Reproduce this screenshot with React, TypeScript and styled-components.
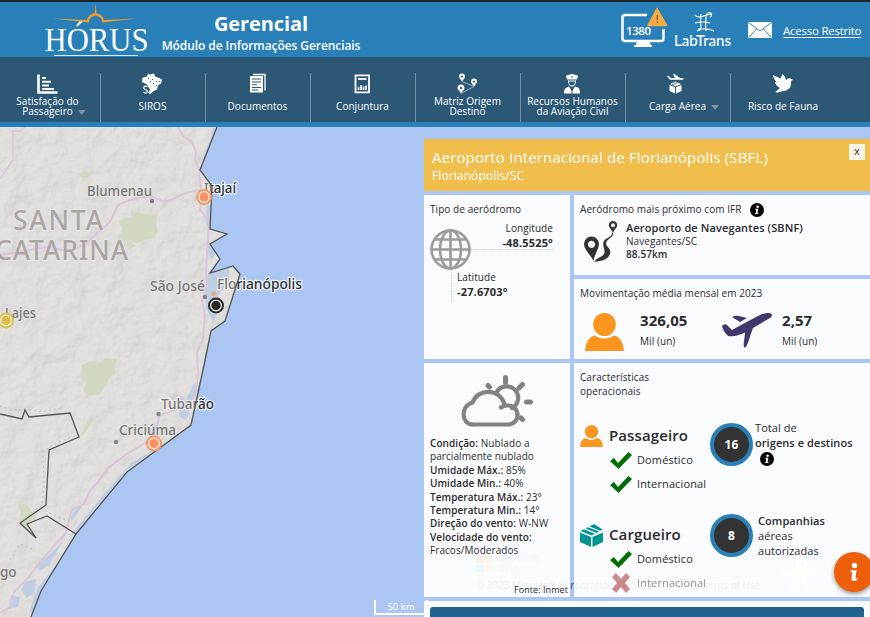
import React from "react";
import styled, { createGlobalStyle } from "styled-components";

const Global = createGlobalStyle`
  * { box-sizing: border-box; }
  html, body { margin: 0; padding: 0; overflow: hidden; }
  body { font-family: "Open Sans", "Noto Sans", sans-serif; color: #2b2b2b; }
  svg { display: block; flex: none; }
`;

const Page = styled.div`
  display: flex;
  flex-direction: column;
  width: 870px;
  height: 617px;
  overflow: hidden;
  border-top: 2px solid #1c232b;
`;

/* ---------- header ---------- */

const Header = styled.header`
  display: flex;
  flex: none;
  height: 55px;
  background: #2980b9;
  color: #fff;
`;

const Logo = styled.svg`
  margin-left: 44px;
  overflow: visible;
`;

const Titles = styled.div`
  width: 200px;
  margin-left: 9px;
  padding-top: 9px;
  text-align: center;
  white-space: nowrap;
`;

const Title = styled.h1`
  margin: 0;
  font-size: 20px;
  line-height: 26px;
  font-weight: 700;
  letter-spacing: -0.1px;
`;

const Subtitle = styled.div`
  font-size: 12px;
  line-height: 17px;
  font-weight: 600;
  letter-spacing: -0.08px;
`;

const HeaderTools = styled.div`
  display: flex;
  flex: 1;
  justify-content: flex-end;
  padding-right: 10px;
`;

const MailIcon = styled.svg`
  margin: 20px 11px 0 17px;
`;

const Access = styled.a`
  width: 77px;
  margin-top: 20px;
  font-size: 11.5px;
  line-height: 17px;
  color: #fff;
  text-decoration: underline;
  text-underline-offset: 2px;
  letter-spacing: -0.24px;
  white-space: nowrap;
`;

/* ---------- navigation ---------- */

const Nav = styled.nav`
  display: flex;
  flex: none;
  height: 70px;
  padding-top: 16px;
  background: #2c5775;
  border-bottom: 5px solid #2980b9;
`;

const NavItem = styled.div<{ $first?: boolean; $last?: boolean }>`
  display: flex;
  flex: none;
  flex-direction: column;
  align-items: center;
  width: 105px;
  margin-left: ${(p) => (p.$first ? "-4px" : "0")};
  padding-right: 1px;
  border-right: ${(p) => (p.$last ? "0" : "1px solid #7292a8")};
  color: #fff;
`;

const NavLabel = styled.div`
  display: flex;
  flex-direction: column;
  align-items: center;
  justify-content: center;
  height: 22px;
  margin-top: 1px;
  font-size: 10px;
  line-height: 10px;
  letter-spacing: 0.03px;
  white-space: nowrap;
`;

const Caret = styled.i`
  display: inline-block;
  width: 8px;
  height: 5px;
  margin: 0 -13px 0 5px;
  background: #7d93a3;
  clip-path: polygon(0 0, 100% 0, 50% 100%);
`;

/* ---------- map ---------- */

const MapArea = styled.main`
  position: relative;
  flex: 1;
  overflow: hidden;
  background: #abc6f2;
`;

const Scale = styled.div`
  position: absolute;
  left: 374px;
  top: 473px;
  width: 54px;
  height: 15px;
  border: solid #fff;
  border-width: 0 2px 2px 2px;
  color: #fff;
  font-size: 9.5px;
  line-height: 14px;
  text-align: center;
`;

const Compass = styled.svg`
  position: absolute;
  left: 780px;
  top: 429px;
`;

const Fab = styled.button`
  position: absolute;
  left: 834px;
  top: 425px;
  width: 40px;
  height: 40px;
  padding: 0;
  border: 0;
  border-radius: 50%;
  background: #ee5f0c;
  box-shadow: 0 2px 4px rgba(0, 0, 0, 0.4);
  display: flex;
  align-items: center;
  justify-content: center;
`;

/* ---------- airport panel ---------- */

const Panel = styled.section`
  position: absolute;
  left: 424px;
  top: 12px;
  width: 446px;
  height: 478px;
  display: flex;
  flex-direction: column;
  gap: 4px;
`;

const PanelHead = styled.div`
  display: flex;
  flex: none;
  justify-content: space-between;
  height: 52px;
  padding: 5px 5px 0 8px;
  background: #f1be4b;
  color: #fff;
`;

const PanelTitle = styled.h2`
  margin: 0;
  padding-top: 3px;
  font-size: 15px;
  line-height: 20px;
  font-weight: 400;
  letter-spacing: 0.14px;
  white-space: nowrap;
`;

const PanelPlace = styled.div`
  font-size: 12px;
  line-height: 17px;
  letter-spacing: 0.1px;
`;

const Close = styled.button`
  width: 16px;
  height: 16px;
  padding: 0 0 2px;
  border: 0;
  background: #fdf7e8;
  color: #333;
  font: 11px/14px "Open Sans", sans-serif;
`;

const Columns = styled.div`
  display: grid;
  flex: none;
  grid-template-columns: 146px 296px;
  gap: 4px;
`;

const Column = styled.div`
  display: flex;
  flex-direction: column;
  gap: 4px;
`;

const Card = styled.div<{ $h: number }>`
  height: ${(p) => p.$h}px;
  padding: 7px 6px 0;
  background: rgba(255, 255, 255, 0.92);
  font-size: 10px;
  line-height: 14px;
  letter-spacing: 0.07px;
  white-space: nowrap;
`;

const Footer = styled.div`
  flex: 1;
  padding: 6px 6px 0;
  background: rgba(255, 255, 255, 0.92);
`;

const FooterBar = styled.div`
  height: 20px;
  border-radius: 3px;
  background: #20638f;
`;

const Row = styled.div<{ $gap?: number; $top?: number }>`
  display: flex;
  gap: ${(p) => p.$gap ?? 0}px;
  margin-top: ${(p) => p.$top ?? 0}px;
`;

const CoordTop = styled.div`
  width: 82px;
  height: 28px;
  margin-top: -7px;
  border-bottom: 1px dotted #ccc;
  text-align: right;
  line-height: 13.5px;
`;

const CoordBottom = styled.div`
  height: 31px;
  margin: 0 0 0 21px;
  padding: 1px 0 0 5px;
  border-left: 1px dotted #ccc;
  line-height: 13.5px;
`;

const Strong = styled.b`
  display: block;
  font-size: 11px;
  font-weight: 700;
  letter-spacing: 0.16px;
`;

const Semi = styled.b`
  font-weight: 600;
`;

const Nearest = styled.div`
  padding-top: 1px;
  line-height: 13.5px;
`;

const NearestName = styled.div`
  font-size: 11px;
  font-weight: 600;
  letter-spacing: 0.11px;
`;

const Figure = styled.div<{ $w: number }>`
  width: ${(p) => p.$w}px;
`;

const FigureValue = styled.div`
  margin: -1px 0 4px;
  font-size: 15px;
  line-height: 20px;
  font-weight: 700;
  letter-spacing: 0.05px;
`;

const Weather = styled.div`
  margin-top: 9px;
  line-height: 13.4px;
`;

const Source = styled.div`
  margin-top: 25px;
  margin-right: -4px;
  font-size: 9px;
  text-align: right;
`;

const Operations = styled.div`
  display: grid;
  grid-template-columns: 130px 160px;
  grid-auto-rows: 99px;
  margin-top: 26px;
`;

const OpTitle = styled.div`
  display: flex;
  align-items: center;
  gap: 6px;
  height: 24px;
  font-size: 15px;
  line-height: 22px;
  font-weight: 600;
`;

const OpName = styled.span`
  margin-top: -2px;
  letter-spacing: 0.1px;
`;

const OpLine = styled.div<{ $off?: boolean }>`
  display: flex;
  align-items: center;
  gap: 5px;
  height: 24px;
  padding-left: 30px;
  font-size: 11px;
  letter-spacing: 0.12px;
  opacity: ${(p) => (p.$off ? 0.5 : 1)};
`;

const Counter = styled.div<{ $raise: number; $gap: number }>`
  display: flex;
  align-items: flex-start;
  gap: ${(p) => p.$gap}px;
  margin-top: -${(p) => p.$raise}px;
  font-size: 11px;
  line-height: 15px;
`;

const Ring = styled.div`
  display: flex;
  flex: none;
  align-items: center;
  justify-content: center;
  width: 43px;
  height: 43px;
  border: 4px solid #2980b9;
  border-radius: 50%;
  background: #333;
  color: #fff;
  font-size: 12px;
  font-weight: 700;
`;

const CounterText = styled.div<{ $up?: number }>`
  margin-top: -${(p) => p.$up ?? 0}px;
`;

const InfoSlot = styled.div`
  padding: 2px 0 0 5px;
`;

/* ---------- drawings ---------- */

const Info = () => (
  <svg width="14" height="14" viewBox="0 0 14 14">
    <circle cx="7" cy="7" r="7" fill="#000" />
    <circle cx="7.6" cy="3.7" r="1.25" fill="#fff" />
    <path d="M5.3 5.8h3L7.5 10h.9v1H5.1v-1h.7l.5-3.2h-1z" fill="#fff" />
  </svg>
);

const Person = ({ w, h }: { w: number; h: number }) => (
  <svg width={w} height={h} viewBox="0 0 39 38" preserveAspectRatio="none">
    <ellipse cx="19.5" cy="11.5" rx="11.3" ry="11.5" fill="#fa961e" />
    <path d="M0 38C1 29 4 24 9.5 22.500Q19.500 29 29.500 22.500C35 24 38 29 39 38z" fill="#fa961e" />
  </svg>
);

const Globe = () => (
  <svg width="41" height="41" viewBox="0 0 41 41" fill="none" stroke="#9b9b9b" strokeWidth="2.6">
    <circle cx="20.5" cy="20.5" r="19" />
    <ellipse cx="20.500" cy="20.5" rx="10.500" ry="19" />
    <path d="M20.500 1v39M1 20.500h39M4.500 10.500h32M4.500 30.500h32" />
  </svg>
);

const Route = () => (
  <svg width="34" height="41" viewBox="0 0 34 41">
    <path d="M29 12C29.500 17 22 18 22 22.500C22 26 27.500 27 26 33C24.500 38 18 40.500 10.500 40.700C13 36 20.500 36 20.500 31C20.500 27 18.500 25 19.500 21C21 16.500 27.500 17 28 12z" fill="#333" />
    <path fillRule="evenodd" d="M7.500 15.500a7.500 7.500 0 0 1 7.500 7.500c0 5-4 9-5.500 17C7 34 0 29 0 23a7.500 7.500 0 0 1 7.500-7.500zm0 4.300a3.600 3.600 0 1 0 .01 0z" fill="#333" />
    <path fillRule="evenodd" d="M29 0a4.200 4.200 0 0 1 4.200 4.200C33.200 7 30 8 29 12.500C28 8 24.800 7 24.800 4.200A4.200 4.200 0 0 1 29 0zm0 2.300a2 2 0 1 0 .01 0z" fill="#333" />
  </svg>
);

const Plane = () => (
  <svg width="50" height="35" viewBox="0 0 50 35" fill="#43366b">
    <path d="M0 13c2-2 4-2 5-1l5 5 9-5L36 3c6-3 11-4 13.500-2 1.500 2-1 4-5 6L31 15c-3 7-4 14-7 19l-2 .5c-1-5 1-10 1-15-6 3-12 4.500-17 3.500C3 20 1 17 0 13z" />
    <path d="M10 4c3-1.500 5-1.500 7-1l8 2-7 4c-2-2-6-3-8-5z" />
  </svg>
);

const Cloud = () => (
  <svg width="72" height="53" viewBox="0 0 72 53" fill="none" stroke="#828286" strokeWidth="4.200" strokeLinecap="round">
    <path d="M12 49.500h35a9.500 9.500 0 0 0 0-19c-3-.3-5 .5-7 2" />
    <path d="M12 49.500C0 49.500-1 31 11.500 27.500C17 13 38 13 43.500 29" />
    <path d="M35 18.500a11.500 11.500 0 1 1 16 14.500" />
    <path d="M44.500 2.500v5M61.500 9.500l-3.500 3.500M65.500 27h4M60 43l1.500 1.500M27 10.500l1.500 1.500" strokeWidth="5" />
  </svg>
);

const Check = () => (
  <svg width="22" height="17" viewBox="0 0 22 17">
    <path d="M0 9l4-3 4 5L18.500 0 22 3 8.500 17z" fill="#006f00" />
  </svg>
);

const Cross = () => (
  <svg width="22" height="20" viewBox="0 0 22 20">
    <path d="M2 4l4-4 5 6 5-6 4 4-5 6 5 6-4 4-5-6-5 6-4-4 5-6z" fill="#a31a1a" />
  </svg>
);

const Box = () => (
  <svg width="23" height="23" viewBox="0 0 23 23" fill="#009594">
    <path d="M0 8.500l11 4.500v10L0 18zM12.500 13L23 8.500V18l-10.500 5zM.5 7L4 5.200l11 4.500-3.300 1.800zM5.500 4.500L8 3.300l11 4.300-2.500 1.300zM9.500 2.500L14 0l8.500 5.500L20 6.800z" />
  </svg>
);

const Horus = () => (
  <Logo width="108" height="55" viewBox="44 2 108 55">
    <path d="M53 18.500l34 1.500c2-9 15-9 17 0l33-1.500-35 4c0-9-13-9-13 0z" fill="#f39a2c" />
    <path d="M94.700 14l.9-11 .9 11z" fill="#f39a2c" />
    <text x="44.500" y="51" fill="#fff" fontFamily="'Liberation Serif', serif" fontSize="33.500" textLength="104" lengthAdjust="spacingAndGlyphs">HÓRUS</text>
    <path d="M54 55.500h84" stroke="#d9e9f4" />
  </Logo>
);

const Monitor = () => (
  <svg width="47" height="55" viewBox="620 2 47 55">
    <path d="M647 15h-22q-2.500 0-2.500 2.500v21q0 2.500 2.500 2.500h36q2.500 0 2.500-2.500V29" fill="none" stroke="#fff" strokeWidth="2.500" />
    <path d="M637 41h12l2 4h1v2h-18v-2h2z" fill="#fff" />
    <path d="M657 9l9.500 17H648z" fill="#f6ab42" stroke="#f6ab42" strokeWidth="1.500" strokeLinejoin="round" transform="translate(0 -.500)" />
    <path d="M657.300 15v5M657.300 21.500v1.500" stroke="#94632d" strokeWidth="1.500" />
    <text x="626" y="35" fill="#fff" fontSize="11.500" fontWeight="600" textLength="25">1380</text>
  </svg>
);

const LabTrans = () => (
  <svg width="64" height="55" viewBox="667 2 64 55">
    <path d="M695 15q2 3 7 1.500t8-2.500q3 0 0 3.500M698 29h8q5 0 8 2M701 14q-1 8 0 14-1 3-4 2.500M706 31q-1-12 1-17 2-3 5 0M695 23q8-2 15 0" fill="none" stroke="#fff" strokeWidth="1.100" />
    <text x="674" y="46" fill="#fff" fontFamily="Lato, sans-serif" fontSize="15" fontWeight="500" textLength="57">LabTrans</text>
  </svg>
);

const Mail = () => (
  <MailIcon width="24" height="16" viewBox="0 0 24 16">
    <path d="M0 0h24v16H0z" fill="#fff" />
    <path d="M.5.5l10 7.500q1.500 1 3 0l10-7.500M.5 15.500l8-8.500M23.500 15.500l-8-8.500" fill="none" stroke="#2980b9" />
  </MailIcon>
);

const navIcons: Record<string, React.ReactNode> = {
  bars: (
    <>
      <path d="M1.500 1v18h19" fill="none" stroke="#fff" strokeWidth="2.600" />
      <path d="M5 4.500h4M5 8.300h9M5 12h7M5 15.500h12" stroke="#fff" strokeWidth="1.900" />
    </>
  ),
  brazil: (
    <>
      <path d="M1 4l4-1 1-3 2 1 4-1 1 3 3 1 4 2-1 4-3 2-1 4-4 2-3 3-2-2 2-3-3-5-4-2-3-1z" fill="#fff" />
      <path d="M6 5h1M10 6h1M14 8h1M11 10h1M14 12h1M17 8h1M8 8h1" stroke="#2c5775" />
      <path d="M5.500 13.200Q3 11.800 2 13.500T3.600 16Q6 17 5 18.800T1.400 18.600" fill="none" stroke="#fff" strokeWidth="1.200" />
    </>
  ),
  docs: (
    <>
      <path d="M6 1h12v16" fill="none" stroke="#fff" strokeWidth="1.300" />
      <path d="M3 2.500h13V19H3z" fill="#fff" />
      <path d="M5 5.500h9M5 8.500h9M5 11.300h5M5 14h9M5 16.500h6" stroke="#2c5775" strokeWidth="1.100" />
    </>
  ),
  chart: (
    <>
      <path d="M3.500 1.800h13.500v17H3.500z" fill="none" stroke="#fff" strokeWidth="1.800" />
      <path d="M6 5.500h8.500" stroke="#fff" strokeWidth="1.800" />
      <path d="M6.500 16.500v-3M9 16.500v-5M11.500 16.500v-3.500M14 16.500v-4.500" stroke="#fff" strokeWidth="1.700" />
    </>
  ),
  pins: (
    <>
      <path fillRule="evenodd" d="M5 0a3 3 0 0 1 3 3c0 2-2 3-3 5C4 6 2 5 2 3a3 3 0 0 1 3-3zm0 2a1 1 0 1 0 .01 0zM17 5a3 3 0 0 1 3 3c0 2-2 3-3 5-1-2-3-3-3-5a3 3 0 0 1 3-3zm0 2a1 1 0 1 0 .01 0zM4 11a3.500 3.500 0 0 1 3.500 3.500c0 2-2.500 3.500-3.500 5.500-1-2-3.500-3.500-3.500-5.500A3.500 3.500 0 0 1 4 11zm0 2.300a1.200 1.200 0 1 0 .01 0z" fill="#fff" />
      <path d="M5 8l12 5-13 7" fill="none" stroke="#b7c7d2" strokeWidth=".8" />
    </>
  ),
  officer: (
    <>
      <path d="M4 2l6-1.500L16 2l-1 4H5zM6 7h8c0 8-8 8-8 0zM2 20c0-5 2-6 5-7l3 5 3-5c4 1 5 2 5 7z" fill="#fff" />
      <path d="M7 8h6q0 3.500-3 4T7 8z" fill="#2c5775" />
      <path d="M10 14v6" stroke="#2c5775" />
      <path d="M9 3.500h2" stroke="#2c5775" strokeWidth=".8" />
    </>
  ),
  cargo: (
    <>
      <path d="M0 2.500l1.500-.3L4 4.500h4L6 .5h1.500L13 4.500h3q1.500.7 0 1.800H3z" fill="#fff" />
      <path d="M2.500 11.500l5.500 2.300V20l-5.500-2.500zM9 13.800l5.500-2.300v6L9 20zM3 10.500L8.500 8l5.500 2.500L8.500 13z" fill="#fff" />
      <path d="M5 11.500l5.500-2.700" stroke="#2c5775" strokeWidth=".9" />
    </>
  ),
  bird: (
    <path d="M0 1.500l7.500 3.500 2-4.500q2.500 2 3.500 6 2-2.500 4.500-1.500l2.500 1.200-2 1.500c1 7-4 9.800-8 9.800l-6 1.800-1.500-1L7 14.500Q2.500 12 2 8.500l2 .5Q.5 6 0 1.500z" fill="#fff" />
  ),
};

const NavIcon = ({ kind }: { kind: string }) => (
  <svg width="21" height="21" viewBox="0 -.5 21 21">
    {navIcons[kind]}
  </svg>
);

const COAST =
  "217,127 200,170 212,186 210,229 227,234 210,244 220,259 210,273 233,266 240,274 225,321 211,331 203,370 191,425 127,472 76,534 41,591 31,617";

const Marker = ({ x, y, c }: { x: number; y: number; c: string }) => (
  <g>
    <circle cx={x} cy={y} r="7" fill="#f4eeea" stroke={c} strokeWidth="1.900" />
    <circle cx={x} cy={y} r="4.700" fill={c} />
  </g>
);

const MapDrawing = () => (
  <svg width="870" height="490" viewBox="0 127 870 490">
    <defs>
      <clipPath id="land"><polygon points={`0,127 ${COAST} 0,617`} /></clipPath>
      <filter id="relief" x="0" y="0" width="1" height="1" colorInterpolationFilters="sRGB">
        <feTurbulence type="fractalNoise" baseFrequency="0.05" numOctaves="4" seed="8" result="n" />
        <feDiffuseLighting in="n" surfaceScale="5" lightingColor="#fff">
          <feDistantLight azimuth="225" elevation="62" />
        </feDiffuseLighting>
      </filter>
    </defs>
    <g clipPath="url(#land)">
      <rect y="127" width="260" height="490" fill="#e3e2e0" />
      <rect y="127" width="260" height="490" filter="url(#relief)" opacity=".16" />
      <g fill="#c9d8b2">
        <path d="M118 221l14-5 3-4 9 2 13 0-1 9 2 9-5 6-9 2-7 3-7-3-7 2-4-6 4-6zM124 241l12 4-7 6-1-5zM79 174l8-2 5 1-2 4-8 1zM82 365l10-4 8 2 5-5 13 1-4 8 2 6-6 4-3 6-7 11-9 2-8-5 3-8-4-6z" />
        <path d="M81 434l7-13 8-4-9 13-5 7zM18 503l8 1 4 5 6 8-4 6-9 6-3-8 1-8z" />
      </g>
      <g fill="#aac4e9">
        <path d="M213 127l-3 12-5 14-2 12-3 5 17-40zM207 205l5 0-1 24-5-4zM208 240l8 13-4 6-6-8zM208 273l21-6 0 14-11 15 3 12-8 14-7-14-1-18zM196 381l-5 8-5 12-5-6-3 6 2 4-1 11 6 4 5-6-2-7 7-10zM211 331l-8 37-6 23-1 8 6-28zM170 440l-42 29-50 62-9 6 36-44 26-30zM83 505l-8 12-4 5v-6l6-8zM63 541l-14 24-9 6-4-6 12-9zM36 579l-2 14-7 5-6-8 4-8zM20 597l-2 10-9 2 2-14zM76 540l-35 51-7 20-5 1 9-25z" />
      </g>
      <path d="M231 268l7 6-8 26-12 15-3-6 10-12z" fill="#e4e4e0" />
      <g fill="none" stroke="#d9b7d9" strokeWidth="2">
        <path d="M25 127l-5 4-7 0v29l-13 19" strokeWidth="1.400" />
        <path d="M178 127l5 9 9 6 4 10-1 8 4 10 2 20-1 20 9 10-1 20-2 30 1 15-5 15 3 15-2 25-6 12 1 18-1 15-3 15-14 8-20 7-4 13-11 15-20 12-17 13-11 15-7 7-6 14-12 6-3 10-3 13-11 12-15 17-12 16-14 14-4 15-10 6" />
        <path d="M0 255l20-3 25-5 25 4 15-6 12-12 13-11 8-17 12-5 20-4 12 5h8l15-8 15-3" />
      </g>
      <path d="M0 406l12 4 15-1 15 3 18-4M75 436l-20 7-12 9 1 34-2 20-15 10M45 511l20 9M10 560l10-16 14 6" fill="none" stroke="#aaa" strokeDasharray="2 3" />
    </g>
    <g fontSize="13.500" fontWeight="500" fontFamily="'Noto Sans', 'Open Sans', sans-serif" fill="#2f2f2f" stroke="#fff" strokeWidth="2.500" paintOrder="stroke" strokeLinejoin="round" strokeOpacity=".8">
      <text x="204" y="193" textLength="32" lengthAdjust="spacingAndGlyphs">Itajaí</text>
      <text x="217" y="289" textLength="85" lengthAdjust="spacingAndGlyphs">Florianópolis</text>
      <text x="161" y="409" textLength="53" lengthAdjust="spacingAndGlyphs">Tubarão</text>
      <g strokeOpacity=".25">
        <text x="87" y="196" textLength="65" lengthAdjust="spacingAndGlyphs">Blumenau</text>
        <text x="150" y="291" textLength="55" lengthAdjust="spacingAndGlyphs">São José</text>
        <text x="5" y="318" textLength="31" lengthAdjust="spacingAndGlyphs">Lajes</text>
        <text x="119" y="435" textLength="57" lengthAdjust="spacingAndGlyphs">Criciúma</text>
        <text x="0" y="577">go</text>
        <g fontSize="26.500" fill="#8c7f80">
          <text x="13" y="230" textLength="90">SANTA</text>
          <text x="-5" y="260" textLength="133">CATARINA</text>
        </g>
      </g>
    </g>
    <g fill="#444">
      <circle cx="152" cy="201" r="2.200" />
      <circle cx="205" cy="297" r="2.200" />
      <circle cx="158.500" cy="414" r="2.200" />
      <circle cx="116" cy="442" r="2.200" />
    </g>
    <polygon points={`0,127 ${COAST} 0,617`} fill="#dddcd8" opacity=".42" />
    <polyline points={COAST} fill="none" stroke="#555" strokeWidth="1.300" />
    <polyline points="0,414 22,419 25,410 29,417 70,413 79,437 49,450 46,505 20,523 36,538 27,524 47,516 76,534" fill="none" stroke="#555" strokeWidth="1.300" />
    <circle cx="214" cy="294" r="2.500" fill="#e9a88c" />
    <Marker x={204} y={197} c="#fa9362" />
    <Marker x={154} y={443.500} c="#fa9362" />
    <Marker x={6} y={320.500} c="#dcbd4a" />
    <Marker x={216} y={305.500} c="#262826" />
    <path d="M476 555h8v8h-8z" fill="#f25022" />
    <path d="M485 555h9v8h-9z" fill="#7fba00" />
    <path d="M476 564h8v8h-8z" fill="#00a4ef" />
    <path d="M485 564h9v8h-9z" fill="#ffb900" />
    <g fontSize="10" fill="#8b837c">
      <text x="498" y="562" textLength="41">Microsoft</text>
      <text x="498" y="572" textLength="20">Bing</text>
      <text x="476" y="589" fill="#444" textLength="284">© 2023 Microsoft Corporation, © 2023 TomTom Terms of Use</text>
    </g>
  </svg>
);

const nav = [
  { icon: "bars", lines: ["Satisfação do", "Passageiro"], caret: true },
  { icon: "brazil", lines: ["SIROS"] },
  { icon: "docs", lines: ["Documentos"] },
  { icon: "chart", lines: ["Conjuntura"] },
  { icon: "pins", lines: ["Matriz Origem", "Destino"] },
  { icon: "officer", lines: ["Recursos Humanos", "da Aviação Civil"] },
  { icon: "cargo", lines: ["Carga Aérea"], caret: true },
  { icon: "bird", lines: ["Risco de Fauna"] },
];

const weather = [
  ["Umidade Máx.:", "85%"],
  ["Umidade Min.:", "40%"],
  ["Temperatura Máx.:", "23°"],
  ["Temperatura Min.:", "14°"],
  ["Direção do vento:", "W-NW"],
];

export default function App() {
  return (
    <Page>
      <Global />
      <Header>
        <Horus />
        <Titles>
          <Title>Gerencial</Title>
          <Subtitle>Módulo de Informações Gerenciais</Subtitle>
        </Titles>
        <HeaderTools>
          <Monitor />
          <LabTrans />
          <Mail />
          <Access>Acesso Restrito</Access>
        </HeaderTools>
      </Header>
      <Nav>
        {nav.map((item, i) => (
          <NavItem key={item.icon} $first={i === 0} $last={i === nav.length - 1}>
            <NavIcon kind={item.icon} />
            <NavLabel>
              {item.lines.map((line, n) => (
                <span key={line}>
                  {line}
                  {item.caret && n === item.lines.length - 1 && <Caret />}
                </span>
              ))}
            </NavLabel>
          </NavItem>
        ))}
      </Nav>
      <MapArea>
        <MapDrawing />
        <Scale>50 km</Scale>
        <Compass width="37" height="37" viewBox="0 0 37 37">
          <path d="M18.500 0l2.500 11 8-5-4.500 8.500L36 18.500l-11.500 3L29 31l-8-5-2.500 11L16 26l-8 5 4.500-9.500L0 18.500l12.500-4L8 6l8 5z" fill="#fff" />
        </Compass>
        <Panel>
          <PanelHead>
            <div>
              <PanelTitle>Aeroporto Internacional de Florianópolis (SBFL)</PanelTitle>
              <PanelPlace>Florianópolis/SC</PanelPlace>
            </div>
            <Close>x</Close>
          </PanelHead>
          <Columns>
            <Column>
              <Card $h={164}>
                Tipo de aeródromo
                <Row $top={13}>
                  <Globe />
                  <CoordTop>
                    Longitude
                    <Strong>-48.5525°</Strong>
                  </CoordTop>
                </Row>
                <CoordBottom>
                  Latitude
                  <Strong>-27.6703°</Strong>
                </CoordBottom>
              </Card>
              <Card $h={234}>
                <Row $top={5}>
                  <Figure $w={31} />
                  <Cloud />
                </Row>
                <Weather>
                  <Semi>Condição:</Semi> Nublado a<br />
                  parcialmente nublado
                  {weather.map(([k, v]) => (
                    <div key={k}>
                      <Semi>{k}</Semi> {v}
                    </div>
                  ))}
                  <Semi>Velocidade do vento:</Semi>
                  <br />
                  Fracos/Moderados
                </Weather>
                <Source>Fonte: Inmet</Source>
              </Card>
            </Column>
            <Column>
              <Card $h={80}>
                <Row $gap={8}>
                  Aeródromo mais próximo com IFR
                  <Row $top={1}>
                    <Info />
                  </Row>
                </Row>
                <Row $top={3} $gap={8}>
                  <Figure $w={38}>
                    <Row $top={1}>
                      <Figure $w={4} />
                      <Route />
                    </Row>
                  </Figure>
                  <Nearest>
                    <NearestName>Aeroporto de Navegantes (SBNF)</NearestName>
                    Navegantes/SC
                    <br />
                    <Semi>88.57km</Semi>
                  </Nearest>
                </Row>
              </Card>
              <Card $h={80}>
                Movimentação média mensal em 2023
                <Row $top={11}>
                  <Figure $w={60}>
                    <Row $top={2}>
                      <Figure $w={5} />
                      <Person w={39} h={38} />
                    </Row>
                  </Figure>
                  <Figure $w={82}>
                    <FigureValue>326,05</FigureValue>
                    Mil (un)
                  </Figure>
                  <Figure $w={60}>
                    <Row $top={2}>
                      <Plane />
                    </Row>
                  </Figure>
                  <Figure $w={60}>
                    <FigureValue>2,57</FigureValue>
                    Mil (un)
                  </Figure>
                </Row>
              </Card>
              <Card $h={234}>
                Características
                <br />
                operacionais
                <Operations>
                  <div>
                    <OpTitle>
                      <Person w={23} h={22} />
                      <OpName>Passageiro</OpName>
                    </OpTitle>
                    <OpLine><Check />Doméstico</OpLine>
                    <OpLine><Check />Internacional</OpLine>
                  </div>
                  <Counter $raise={1} $gap={2}>
                    <Ring>16</Ring>
                    <CounterText $up={3}>
                      Total de
                      <br />
                      <Semi>origens e destinos</Semi>
                      <InfoSlot><Info /></InfoSlot>
                    </CounterText>
                  </Counter>
                  <div>
                    <OpTitle>
                      <Box />
                      <OpName>Cargueiro</OpName>
                    </OpTitle>
                    <OpLine><Check />Doméstico</OpLine>
                    <OpLine $off><Cross />Internacional</OpLine>
                  </div>
                  <Counter $raise={9} $gap={5}>
                    <Ring>8</Ring>
                    <CounterText $up={1}>
                      <Semi>Companhias</Semi>
                      <br />
                      aéreas
                      <br />
                      autorizadas
                    </CounterText>
                  </Counter>
                </Operations>
              </Card>
            </Column>
          </Columns>
          <Footer>
            <FooterBar />
          </Footer>
        </Panel>
        <Fab aria-label="Informações">
          <svg width="12" height="20" viewBox="0 0 12 20" fill="#fff">
            <circle cx="6.500" cy="3.500" r="2.700" />
            <path d="M2.500 8.500q3-.5 6-.5L7.500 16q.5 1 2.500.5-1 2.500-4 2.500-2.500 0-2.500-2l.8-6.500q-.8-.8-1.800-.5z" />
          </svg>
        </Fab>
      </MapArea>
    </Page>
  );
}
